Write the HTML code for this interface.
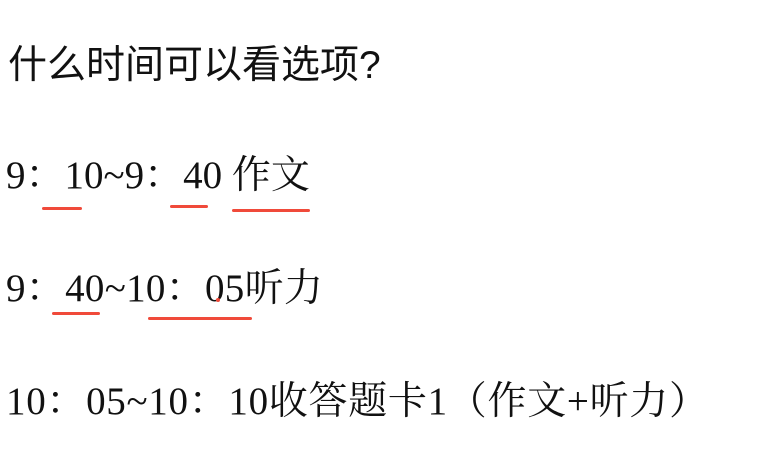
<!DOCTYPE html>
<html><head><meta charset="utf-8"><style>
html,body{margin:0;padding:0;background:#fff;width:777px;height:475px;overflow:hidden;position:relative}
.t{position:absolute;white-space:pre;color:#111;font-family:"Liberation Serif","Noto Serif CJK SC",serif;font-size:39px;line-height:1}
.u{position:absolute;height:3px;background:#f04a3a;border-radius:2px}
</style></head><body>
<div class="t" style="left:8px;top:46px;font-size:39px;font-family:'Liberation Sans','Noto Sans CJK SC',sans-serif">什么时间可以看选项?</div>
<div class="t" style="left:6px;top:156px">9：10~9：40 作文</div>
<div class="u" style="left:42px;top:207px;width:40px"></div>
<div class="u" style="left:170px;top:205px;width:38px"></div>
<div class="u" style="left:232px;top:209px;width:78px"></div>
<div class="t" style="left:6px;top:269px;letter-spacing:0.3px">9：40~10：05听力</div>
<div class="u" style="left:52px;top:312px;width:48px"></div>
<div class="u" style="left:148px;top:317px;width:104px"></div>
<div class="u" style="left:216px;top:298px;width:4px;height:4px"></div>
<div class="t" style="left:6px;top:382px;letter-spacing:0.7px">10：05~10：10收答题卡1（作文+听力）</div>
</body></html>
